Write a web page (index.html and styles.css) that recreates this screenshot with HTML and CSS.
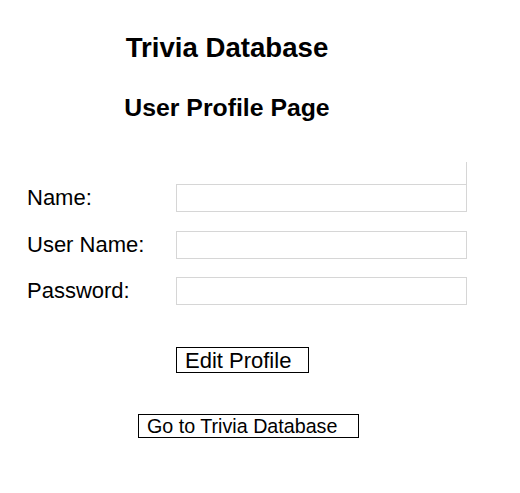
FILE: index.html
```html
<!DOCTYPE html>
<html>
<head>
<meta charset="utf-8">
<title>User Profile</title>
<link rel="stylesheet" href="styles.css">
</head>
<body>
<div class="page">
  <header class="header">
    <h1 class="title">Trivia Database</h1>
    <h2 class="subtitle">User Profile Page</h2>
  </header>
  <form class="profile-form">
    <div class="edge-line"></div>
    <div class="rows">
      <label class="label" for="name">Name:</label>
      <input class="field" id="name" type="text">
      <label class="label" for="username">User Name:</label>
      <input class="field" id="username" type="text">
      <label class="label" for="password">Password:</label>
      <input class="field" id="password" type="password">
    </div>
  </form>
  <div class="edit-row">
    <button class="btn btn-edit" type="button">Edit Profile</button>
  </div>
  <div class="go-row">
    <button class="btn btn-go" type="button">Go to Trivia Database</button>
  </div>
</div>
</body>
</html>
```

FILE: styles.css
```css
html, body {
  margin: 0;
  padding: 0;
  background: #ffffff;
}

body {
  font-family: "Liberation Sans", Arial, Helvetica, sans-serif;
  color: #000000;
}

.page {
  padding-top: 32px;
}

.header {
  width: 454px;
  text-align: center;
}

.title {
  margin: 0;
  font-size: 27.6px;
  font-weight: bold;
  line-height: 31px;
}

.subtitle {
  margin: 31px 0 0 0;
  font-size: 24.8px;
  font-weight: bold;
  line-height: normal;
}

.profile-form {
  margin: 40px 0 0 27px;
  width: 440px;
}

.edge-line {
  height: 22px;
  border-right: 1px solid #d6d6d6;
}

.rows {
  display: grid;
  grid-template-columns: 149px 291px;
  grid-auto-rows: 28px;
  row-gap: 18.5px;
  align-items: center;
}

.label {
  font-size: 22px;
  line-height: 28px;
}

.field {
  box-sizing: border-box;
  width: 291px;
  height: 28px;
  margin: 0;
  padding: 0 4px;
  border: 1px solid #d6d6d6;
  background: #ffffff;
  outline: none;
}

.edit-row {
  margin: 42px 0 0 176px;
}

.go-row {
  margin: 41px 0 0 138px;
}

.btn {
  box-sizing: border-box;
  display: block;
  margin: 0;
  background: #ffffff;
  border: 1px solid #000000;
  border-radius: 0;
  color: #000000;
  font-family: "Liberation Sans", Arial, Helvetica, sans-serif;
  text-align: left;
  line-height: normal;
  cursor: pointer;
}

.btn-edit {
  width: 133px;
  height: 26px;
  padding: 0 0 0 8px;
  font-size: 22px;
}

.btn-go {
  width: 221px;
  height: 24px;
  padding: 0 0 0 8px;
  font-size: 19.7px;
}
```
